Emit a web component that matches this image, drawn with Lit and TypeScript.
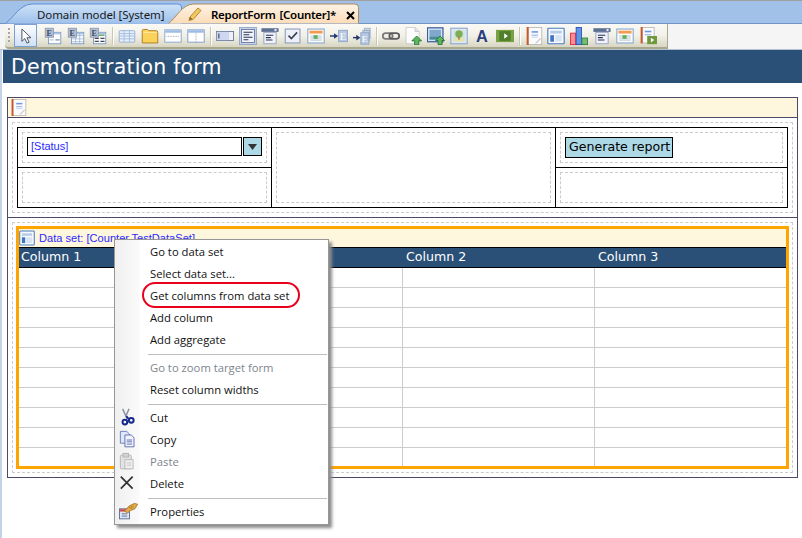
import { LitElement, html, css, svg } from 'lit';
import { customElement } from 'lit/decorators.js';

// small toolbar glyphs, all in a 22x22 box
const entity = (x: number, y: number) => svg`
  <rect x=${x + 0.5} y=${y + 0.5} width="10" height="11" fill="#b4c0d4" stroke="#8d97ab"/>
  <text x=${x + 5.5} y=${y + 9.5} text-anchor="middle" font-family="Liberation Serif" font-weight="700" font-size="10" fill="#3d4a66">E</text>`;

const win = (x: number, y: number, w: number, h: number) => svg`
  <rect x=${x + 0.5} y=${y + 0.5} width=${w - 1} height=${h - 1} fill="#fdfdff" stroke="#6f8fbd"/>
  <rect x=${x + 1} y=${y + 1} width=${w - 2} height="2" fill="#a9c3e6"/>`;

const icons: Record<string, unknown> = {
  pointer: svg`<path d="M6 2.500v15l3.600-3.400 2.600 5.600 2.600-1.200-2.600-5.400h4.800z" fill="#fff" stroke="#2d3440"/>`,
  form1: svg`${win(5, 6, 16, 15)}<rect x="14" y="15" width="5" height="1.500" fill="#7d8ca8"/><rect x="7" y="15" width="5" height="1.500" fill="#b9c6da"/>${entity(1, 1)}`,
  form2: svg`${win(5, 6, 16, 15)}<path d="M6 10.500h14M6 14.500h14M6 18h14M10.500 7v13M15.500 7v13" stroke="#9fb6d6" fill="none"/>${entity(1, 1)}`,
  form3: svg`${win(5, 6, 16, 15)}<path d="M12 10h7" stroke="#4fa04a" stroke-width="1.500"/><path d="M7 14h5M14 14h5M7 17.500h5M14 17.500h5" stroke="#40485c" stroke-width="1.500"/>${entity(1, 1)}`,
  grid: svg`<rect x="1.500" y="4.500" width="19" height="14" rx="1" fill="#e8f0fb" stroke="#86a6d4"/><path d="M2 8h18M2 11h18M2 14.500h18M7.500 5v13M14 5v13" stroke="#9ab5dc" fill="none"/>`,
  folder: svg`<path d="M1.500 4.500q0-1.500 1.500-1.500h5l1.500 1.500h9q2 0 2 2v13h-19z" fill="#fbd25a" stroke="#a56a14"/><rect x="2.500" y="6" width="17" height="1" fill="#fff0b0"/>`,
  rows: svg`<rect x="1" y="3.500" width="20" height="15" fill="#fff" stroke="#7c9bc8"/><rect x="1.500" y="4" width="19" height="3" fill="#9dbbe3"/><path d="M3 11.500h16" stroke="#8a96a8" stroke-dasharray="1 1"/>`,
  cols: svg`<rect x="1" y="3.500" width="20" height="15" fill="#fff" stroke="#6f93c8"/><rect x="1.500" y="4" width="19" height="3" fill="#9dbbe3"/><path d="M11 7v11" stroke="#8a96a8" stroke-dasharray="1 1"/>`,
  textbox: svg`<rect x="0.500" y="5.500" width="21" height="11" fill="#eef0fa" stroke="#5f6f94"/><rect x="1" y="6" width="15" height="10" fill="#cfd6f0"/><path d="M3.500 8v6" stroke="#2a3350" stroke-width="1.200"/>`,
  memo: svg`<rect x="0.500" y="0.500" width="21" height="21" fill="#c4d3ea" stroke="#8aa0c4"/><rect x="3" y="3" width="16" height="16" fill="#f2f2fc" stroke="#5f6f94"/><path d="M5.500 6.500h11M5.500 9.500h7M5.500 12.500h11M5.500 15.500h6" stroke="#2a3350" stroke-width="1.300"/>`,
  labeled: svg`<rect x="0.500" y="1.500" width="21" height="4.500" fill="#5d6f92"/><rect x="16.500" y="2.500" width="2.500" height="2.500" fill="#eef"/><rect x="3.500" y="6.500" width="15" height="14" fill="#f0f1fa" stroke="#8a9cbc"/><path d="M6 10h9M6 13h6M6 16h8" stroke="#2a3350" stroke-width="1.300"/>`,
  check: svg`<rect x="1.500" y="2.500" width="18" height="17" fill="#eef0f8" stroke="#8a9cbc" stroke-width="1.300"/><path d="M5.500 10.500l3.500 3.500 7-7.500" fill="none" stroke="#3a4252" stroke-width="2"/>`,
  calendar: svg`<rect x="1" y="2.500" width="20" height="17" fill="#fdfdf6" stroke="#86a6d4" stroke-width="1.300"/><rect x="3" y="4.500" width="16" height="3.500" fill="#f59a52"/><path d="M4 11h14M4 13.500h14M4 16h14" stroke="#9fb6d6"/><rect x="8" y="10" width="5" height="4.500" fill="#63b05c"/>`,
  linkE: svg`<path d="M0 11h6" stroke="#24386e" stroke-width="1.800"/><path d="M5 7.500l5 3.500-5 3.500z" fill="#24386e"/><rect x="10.500" y="4" width="11" height="14" fill="#b4c6e0" stroke="#8da3c4"/><text x="16" y="15.500" text-anchor="middle" font-family="Liberation Serif" font-weight="700" font-size="12" fill="#f2f5fa">E</text>`,
  linkEs: svg`<path d="M0 13h5" stroke="#24386e" stroke-width="1.800"/><path d="M4 9.500l5 3.500-5 3.500z" fill="#24386e"/><rect x="14" y="1.500" width="8" height="12" fill="#ccd6e6" stroke="#a2b0c8"/><rect x="12" y="4" width="8" height="13" fill="#bfcde2" stroke="#97a8c4"/><rect x="9.500" y="7" width="10" height="14" fill="#b4c6e0" stroke="#8da3c4"/><text x="14.500" y="18.500" text-anchor="middle" font-family="Liberation Serif" font-weight="700" font-size="11" fill="#f2f5fa">E</text>`,
  link: svg`<rect x="1" y="7.500" width="12" height="7" rx="3.500" fill="none" stroke="#7a7a7a" stroke-width="2.200"/><rect x="9" y="7.500" width="12" height="7" rx="3.500" fill="none" stroke="#5c5c5c" stroke-width="2.200"/>`,
  fileUp: svg`<path d="M2.500 0.500h11l5 5v15h-16z" fill="#fdfdfd" stroke="#c4c4c4"/><path d="M13.500 0.500v5h5" fill="#e4e4e4" stroke="#c4c4c4"/><path d="M15.500 11l6 6h-3.500v5h-5v-5h-3.500z" fill="#5cb85c" stroke="#1f6e34"/>`,
  imgUp: svg`<rect x="0.500" y="1" width="19" height="17" fill="#d4e4f6" stroke="#3c5c9c" stroke-width="1.500"/><rect x="3" y="3.500" width="14" height="8" fill="#7fa8cc"/><rect x="3" y="11.500" width="14" height="4" fill="#4a8a9c"/><path d="M16 11l5.500 5.500h-3v5h-5v-5h-3z" fill="#5cb85c" stroke="#1f6e34"/>`,
  picture: svg`<rect x="1" y="1.500" width="20" height="19" fill="#dde8f4" stroke="#8aa6cc" stroke-width="1.300"/><rect x="4" y="4.500" width="14" height="13" fill="#cfe2da"/><rect x="4" y="14" width="14" height="3.500" fill="#e6e2a8"/><circle cx="11" cy="8.500" r="4.500" fill="#7dae55"/><rect x="10" y="12" width="2" height="3.500" fill="#b08040"/>`,
  letter: svg`<text x="11" y="18" text-anchor="middle" font-family="Liberation Sans" font-weight="700" font-size="20" fill="#2b3f80">A</text>`,
  movie: svg`<rect x="0" y="3.500" width="22" height="15" fill="#7aa044"/><rect x="4" y="5" width="14" height="12" fill="#4f7f28"/><path d="M10 7.500l4.500 3.500-4.500 3.500z" fill="#fff"/>`,
  report: svg`<rect x="3.500" y="0.500" width="17" height="21" fill="#fbfbfd" stroke="#b4b4b4"/><rect x="2" y="0" width="2.500" height="22" fill="#c45a2c"/><path d="M8 6h8" stroke="#6f9ae0" stroke-width="2"/><path d="M8 10h8" stroke="#6f9ae0"/><path d="M8 12.500h8" stroke="#b9cdee"/><path d="M13 20l6-6" stroke="#c8c8c8" stroke-width="1.500"/>`,
  layout: svg`<rect x="1" y="1.500" width="20" height="19" rx="1" fill="#f6f9fe" stroke="#4a7cc0" stroke-width="1.400"/><rect x="4" y="4.500" width="14" height="3.500" fill="#b6cdea"/><rect x="4" y="10" width="4.500" height="8" fill="#3f74c0"/><rect x="10" y="10" width="8" height="8" fill="#d8e4f4"/>`,
  chart: svg`<rect x="0.500" y="7.500" width="6.500" height="14" fill="#fb8a92" stroke="#e02030"/><rect x="7.500" y="0.500" width="6.500" height="21" fill="#5f94e6" stroke="#2048b0"/><rect x="14.500" y="13.500" width="7" height="8" fill="#74bb78" stroke="#2a7a34"/>`,
  reportGo: svg`<rect x="3.500" y="0.500" width="15" height="19" fill="#fbfbfd" stroke="#b4b4b4"/><rect x="2" y="0" width="2.500" height="20" fill="#c45a2c"/><path d="M7 5.500h8" stroke="#6f9ae0" stroke-width="2"/><path d="M7 9.500h8" stroke="#6f9ae0"/><rect x="10" y="11" width="12" height="10" fill="#6f9a3c"/><path d="M14.500 13l4 3-4 3z" fill="#fff"/>`,
  cut: svg`<path d="M4 1l5 11M11 1L8 8" stroke="#8890a0" stroke-width="1.600" fill="none"/><path d="M8 9l2.500 3" stroke="#14288c" stroke-width="2"/><circle cx="6.500" cy="15.500" r="2.600" fill="none" stroke="#14288c" stroke-width="2.200"/><circle cx="13.500" cy="13.500" r="2.600" fill="none" stroke="#14288c" stroke-width="2.200"/>`,
  copy: svg`<path d="M1.500 1.500h7l3 3v10h-10z" fill="#dfe8fa" stroke="#6a78b8"/><path d="M6.500 5.500h7l3 3v10h-10z" fill="#f2f5fe" stroke="#5a68a8"/><path d="M8.500 11h6M8.500 13h6M8.500 15.500h6" stroke="#5a68a8"/>`,
  paste: svg`<rect x="1.500" y="3.500" width="12" height="15" rx="1" fill="#e2e2e2" stroke="#b4b4b4"/><rect x="4.500" y="1.500" width="6" height="4" fill="#d2d2d2" stroke="#b4b4b4"/><rect x="6.500" y="8.500" width="9" height="10" fill="#f0f0f0" stroke="#b8b8b8"/><path d="M8.500 12h5M8.500 14.500h5" stroke="#c0c0c0"/>`,
  del: svg`<path d="M2 3l13 13M15 3L2 16" stroke="#333" stroke-width="1.900" fill="none"/>`,
  props: svg`<rect x="0.500" y="7.500" width="11" height="11" fill="#dfe6f6" stroke="#5b6a90"/><rect x="1" y="8" width="10" height="2.500" fill="#d04848"/><path d="M3 13h6M3 15.500h6" stroke="#5b6a90"/><path d="M6 10l5-5.500 6-3 3.500 1-3 5-5 2-3 2.500z" fill="#e2aa48" stroke="#9c6c1c" stroke-width="0.800"/><path d="M11 6l4 1M13 4.500l3 1" stroke="#9c6c1c" stroke-width="0.700"/>`,
};

const toolbar = [
  ['form1', 'form2', 'form3'],
  ['grid', 'folder', 'rows', 'cols'],
  ['textbox', 'memo', 'labeled', 'check', 'calendar', 'linkE', 'linkEs'],
  ['link', 'fileUp', 'imgUp', 'picture', 'letter', 'movie'],
  ['report', 'layout', 'chart', 'labeled', 'calendar', 'reportGo'],
];

type MenuEntry = { label: string; icon?: string; off?: boolean; ring?: boolean } | null;

const menu: MenuEntry[] = [
  { label: 'Go to data set' },
  { label: 'Select data set...' },
  { label: 'Get columns from data set', ring: true },
  { label: 'Add column' },
  { label: 'Add aggregate' },
  null,
  { label: 'Go to zoom target form', off: true },
  { label: 'Reset column widths' },
  null,
  { label: 'Cut', icon: 'cut' },
  { label: 'Copy', icon: 'copy' },
  { label: 'Paste', icon: 'paste', off: true },
  { label: 'Delete', icon: 'del' },
  null,
  { label: 'Properties', icon: 'props' },
];

@customElement('app-root')
export class AppRoot extends LitElement {
  static styles = css`
    :host {
      display: block;
      position: relative;
      width: 802px;
      height: 538px;
      overflow: hidden;
      background: #fff;
      font-family: 'Liberation Sans', sans-serif;
    }
    svg { display: block; }

    /* tab strip */
    .tabs {
      position: relative;
      height: 22px;
      background: #a2c1e8;
      border-top: 1px solid #a0a0a0;
      border-bottom: 1px solid #7094c8;
      font-family: 'Noto Sans', sans-serif;
      font-size: 11.500px;
      color: #1a1a1a;
    }
    .tab-shapes { position: absolute; left: 0; top: -1px; }
    .tab-row { position: relative; display: flex; height: 22px; align-items: center; padding-top: 5px; box-sizing: border-box; }
    .tab-one { margin-left: 37px; width: 152px; letter-spacing: -0.1px; }
    .tab-two { margin-left: 22px; font-weight: 600; color: #000; letter-spacing: -0.3px; word-spacing: 1.500px; }
    .close { margin-left: 10px; margin-top: 1px; }

    /* toolbar */
    .toolbar-wrap {
      height: 26px;
      background: #f5f5f5;
      box-sizing: border-box;
      border-bottom: 1px solid #b4c0d0;
    }
    .toolbar {
      display: flex;
      align-items: center;
      margin-left: 5px;
      width: 663px;
      height: 25px;
      box-sizing: border-box;
      padding-left: 3px;
      background: linear-gradient(#faf9f5, #f2f1e8 50%, #d8d6c2);
      border-bottom: 2px solid #a9a88c;
      border-right: 1px solid #a9a88c;
      border-radius: 4px 0 0 4px;
    }
    .grip {
      width: 2px;
      height: 16px;
      margin-right: 4px;
      background: repeating-linear-gradient(#a8a8a8 0 2px, transparent 2px 4px);
    }
    .select {
      width: 23px;
      height: 23px;
      flex: none;
      box-sizing: border-box;
      display: flex;
      align-items: center;
      justify-content: center;
      border: 1px solid #7d9fd2;
      background: linear-gradient(#fdfeff, #cfe0f6);
      margin-right: 4.500px;
    }
    .sep { flex: none; width: 6.200px; display: flex; justify-content: center; }
    .sep i { display: block; width: 1px; height: 18px; background: #c8c6b4; box-shadow: 1px 0 0 #fff; }
    .slot { flex: none; width: 22.800px; display: flex; justify-content: center; }

    /* page */
    .page { border-left: 2px solid #c5d3e6; height: 488px; box-sizing: border-box; }
    .title {
      margin-left: 1px;
      height: 33px;
      background: #2a5078;
      color: #fff;
      font-family: 'DejaVu Sans', sans-serif;
      font-size: 20.500px;
      line-height: 34px;
      padding-left: 8px;
      letter-spacing: 0.2px;
    }
    .form {
      margin: 14px 0 0 5px;
      width: 791px;
      height: 381px;
      box-sizing: border-box;
      border: 1px solid #4a4a68;
    }
    .form-head {
      height: 20px;
      box-sizing: border-box;
      background: #fef6dd;
      border-bottom: 1px solid #4a4a68;
      padding: 1px 0 0 2px;
    }
    .section { padding: 4px; border-bottom: 1px solid #4a4a68; }
    .section:last-child { border-bottom: 0; }
    .dashed { border: 1px dashed #ccc; }
    .layout-box { padding: 4px; height: 91px; box-sizing: border-box; }
    .layout-grid {
      display: grid;
      grid-template-columns: 253px 283px 231px;
      grid-template-rows: 39px 39px;
      gap: 1px;
      padding: 1px;
      width: 771px;
      height: 81px;
      box-sizing: border-box;
      background: #000;
    }
    .cell { background: #fff; padding: 4px; display: flex; min-width: 0; }
    .cell.tall { grid-column: 2; grid-row: 1 / 3; }
    .slot-box { flex: 1; padding: 4px; box-sizing: border-box; display: flex; align-items: flex-start; min-width: 0; }
    .status {
      flex: 1;
      height: 19px;
      box-sizing: border-box;
      border: 1px solid #000;
      color: #2a2aff;
      font-size: 11px;
      line-height: 16px;
      padding-left: 3px;
    }
    .arrow {
      width: 19px;
      height: 19px;
      margin-left: 1px;
      box-sizing: border-box;
      border: 1px solid #000;
      background: #add8e6;
      display: flex;
      align-items: center;
      justify-content: center;
    }
    .generate {
      height: 21px;
      box-sizing: border-box;
      border: 1px solid #000;
      background: #add8e6;
      font-family: 'DejaVu Sans', sans-serif;
      font-size: 12.600px;
      line-height: 18px;
      padding: 0 2px 0 3px;
      color: #000;
    }
    .data-box { height: 251px; box-sizing: border-box; padding: 3px; margin: 0; }
    .dataset { border: 3px solid #ffa500; height: 243px; box-sizing: border-box; }
    .ds-head {
      height: 18px;
      background: #fef6dd;
      display: flex;
      align-items: center;
      gap: 4px;
      color: #2a2aff;
      font-size: 11.100px;
    }
    .columns, .row { display: grid; grid-template-columns: 384px 192px 191px; }
    .columns {
      height: 21px;
      box-sizing: border-box;
      background: #2a5078;
      border-top: 1px solid #000;
      border-bottom: 1px solid #000;
      color: #fff;
      font-family: 'DejaVu Sans', sans-serif;
      font-size: 12.600px;
      line-height: 18px;
    }
    .columns div { padding-left: 3px; }
    .columns div:first-child { padding-left: 2px; }
    .row { height: 20px; box-sizing: border-box; border-bottom: 1px solid #ccc; }
    .row:last-child { border-bottom: 0; height: 18px; }
    .row div { border-right: 1px solid #ccc; }
    .row div:last-child { border-right: 0; }

    /* context menu */
    .menu {
      position: absolute;
      left: 114px;
      top: 239px;
      width: 215px;
      height: 286px;
      box-sizing: border-box;
      padding: 1px;
      border: 1px solid #979797;
      background: linear-gradient(90deg, #f0f0f0, #fafafa 24px, #fff 25px);
      box-shadow: 3px 3px 3px #8c8c8c;
      font-family: 'Open Sans', sans-serif;
      font-size: 11.250px;
      color: #111;
    }
    .item { position: relative; height: 22px; line-height: 22px; padding-left: 34px; white-space: nowrap; }
    .item.off { color: #7e868e; }
    .item-icon { position: absolute; left: 3px; top: 1px; width: 20px; height: 20px; }
    .ring {
      position: absolute;
      left: 26px;
      top: -3px;
      width: 158px;
      height: 26px;
      box-sizing: border-box;
      border: 2px solid #e8001c;
      border-radius: 13px;
    }
    .divider { height: 6px; padding: 2.500px 0 0 32px; box-sizing: border-box; }
    .divider i { display: block; height: 1px; background: #bdbdbd; }
  `;

  private icon(name: string, size = 18) {
    return html`<svg width=${size} height=${size} viewBox="0 0 22 22">${icons[name]}</svg>`;
  }

  render() {
    const rows = Array.from({ length: 10 });
    return html`
      <div class="tabs">
        <svg class="tab-shapes" width="802" height="24" viewBox="0 0 802 24">
          <defs>
            <linearGradient id="tabBlue" x1="0" y1="0" x2="0" y2="1"><stop offset="0" stop-color="#cfe2f8"/><stop offset="1" stop-color="#9dbfea"/></linearGradient>
            <linearGradient id="tabOrange" x1="0" y1="0" x2="0" y2="1"><stop offset="0" stop-color="#fdf3e6"/><stop offset="1" stop-color="#fcdcb8"/></linearGradient>
          </defs>
          <path d="M5.500 23.500C14 17 20 4.500 32 4H178q3.500 0 3.500 3V24" fill="url(#tabBlue)" stroke="#5f8fd0"/>
          <path d="M168.500 23.500C176 18 182 4.500 193 4H355q3.500 0 3.500 3.500V23.500" fill="url(#tabOrange)" stroke="#ab8c5c"/>
          <path d="M190 17l8-9 3 2.500-8 9-4 1z" fill="#f4c860" stroke="#b88a30"/>
          <path d="M189 20l1-3 2.500 2z" fill="#80602a"/>
        </svg>
        <div class="tab-row">
          <span class="tab-one">Domain model [System]</span>
          <span class="tab-two">ReportForm [Counter]*</span>
          <svg class="close" width="9" height="9" viewBox="0 0 9 9"><path d="M1 1l7 7M8 1l-7 7" stroke="#000" stroke-width="2"/></svg>
        </div>
      </div>
      <div class="toolbar-wrap">
        <div class="toolbar">
          <div class="grip"></div>
          <div class="select">${this.icon('pointer')}</div>
          ${toolbar.map(
            (group, i) => html`
              ${i ? html`<div class="sep"><i></i></div>` : ''}
              ${group.map((name) => html`<div class="slot">${this.icon(name)}</div>`)}
            `
          )}
        </div>
      </div>
      <div class="page">
        <div class="title">Demonstration form</div>
        <div class="form">
          <div class="form-head">${this.icon('report', 17)}</div>
          <div class="section">
            <div class="dashed layout-box">
              <div class="layout-grid">
                <div class="cell">
                  <div class="dashed slot-box">
                    <div class="status">[Status]</div>
                    <div class="arrow"><svg width="9" height="6" viewBox="0 0 9 6"><path d="M0 0h9L4.500 6z" fill="#333"/></svg></div>
                  </div>
                </div>
                <div class="cell tall"><div class="dashed slot-box"></div></div>
                <div class="cell">
                  <div class="dashed slot-box"><div class="generate">Generate report</div></div>
                </div>
                <div class="cell"><div class="dashed slot-box"></div></div>
                <div class="cell"><div class="dashed slot-box"></div></div>
              </div>
            </div>
          </div>
          <div class="section">
            <div class="dashed data-box">
              <div class="dataset">
                <div class="ds-head">${this.icon('layout', 16)}<span>Data set: [Counter.TestDataSet]</span></div>
                <div class="columns"><div>Column 1</div><div>Column 2</div><div>Column 3</div></div>
                ${rows.map(() => html`<div class="row"><div></div><div></div><div></div></div>`)}
              </div>
            </div>
          </div>
        </div>
      </div>
      <div class="menu">
        ${menu.map((m) =>
          m
            ? html`<div class="item ${m.off ? 'off' : ''}">
                ${m.icon ? html`<span class="item-icon">${this.icon(m.icon, 20)}</span>` : ''}
                ${m.label}
                ${m.ring ? html`<span class="ring"></span>` : ''}
              </div>`
            : html`<div class="divider"><i></i></div>`
        )}
      </div>
    `;
  }
}
